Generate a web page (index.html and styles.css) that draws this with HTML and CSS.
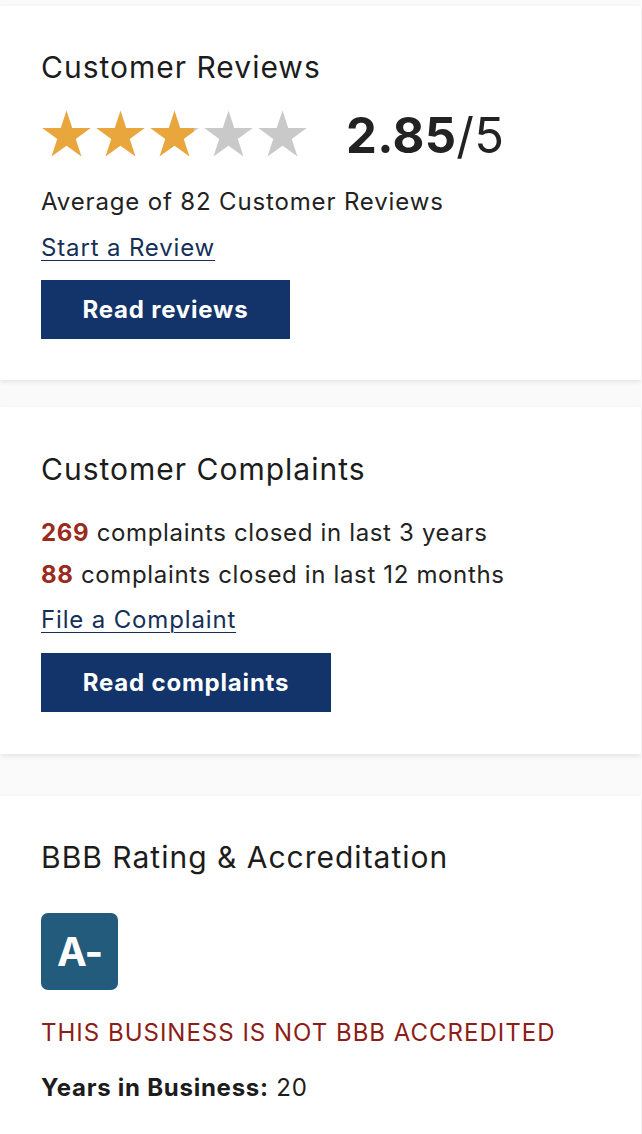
FILE: index.html
```html
<!DOCTYPE html>
<html lang="en">
<head>
<meta charset="utf-8">
<title>Business Profile</title>
<link rel="stylesheet" href="styles.css">
</head>
<body>
<div class="page">
  <section class="card card-reviews">
    <h2 class="card-title">Customer Reviews</h2>
    <div class="rating-row">
      <div class="stars">
        <svg class="star" viewBox="0 0 100 90.45"><polygon class="on" points="50,0 61.23,34.55 97.55,34.55 68.16,55.9 79.39,90.45 50,69.1 20.61,90.45 31.84,55.9 2.45,34.55 38.77,34.55"/></svg>
        <svg class="star" viewBox="0 0 100 90.45"><polygon class="on" points="50,0 61.23,34.55 97.55,34.55 68.16,55.9 79.39,90.45 50,69.1 20.61,90.45 31.84,55.9 2.45,34.55 38.77,34.55"/></svg>
        <svg class="star" viewBox="0 0 100 90.45"><defs><linearGradient id="part" x1="0" x2="1" y1="0" y2="0"><stop offset="0.9" stop-color="#e9a63d"/><stop offset="0.9" stop-color="#c9c9c9"/></linearGradient></defs><polygon fill="url(#part)" points="50,0 61.23,34.55 97.55,34.55 68.16,55.9 79.39,90.45 50,69.1 20.61,90.45 31.84,55.9 2.45,34.55 38.77,34.55"/></svg>
        <svg class="star" viewBox="0 0 100 90.45"><polygon class="off" points="50,0 61.23,34.55 97.55,34.55 68.16,55.9 79.39,90.45 50,69.1 20.61,90.45 31.84,55.9 2.45,34.55 38.77,34.55"/></svg>
        <svg class="star" viewBox="0 0 100 90.45"><polygon class="off" points="50,0 61.23,34.55 97.55,34.55 68.16,55.9 79.39,90.45 50,69.1 20.61,90.45 31.84,55.9 2.45,34.55 38.77,34.55"/></svg>
      </div>
      <div class="score"><strong>2.85</strong>/5</div>
    </div>
    <p class="line">Average of 82 Customer Reviews</p>
    <p class="line"><a class="link" href="#">Start a Review</a></p>
    <a class="btn btn-reviews" href="#">Read reviews</a>
  </section>

  <section class="card card-complaints">
    <h2 class="card-title">Customer Complaints</h2>
    <p class="stat"><strong class="num">269</strong> complaints closed in last 3 years</p>
    <p class="stat"><strong class="num">88</strong> complaints closed in last 12 months</p>
    <p class="line link-line"><a class="link" href="#">File a Complaint</a></p>
    <a class="btn btn-complaints" href="#">Read complaints</a>
  </section>

  <section class="card card-rating">
    <h2 class="card-title">BBB Rating &amp; Accreditation</h2>
    <div class="badge">A-</div>
    <p class="not-accredited">THIS BUSINESS IS NOT BBB ACCREDITED</p>
    <p class="years"><strong>Years in Business:</strong> 20</p>
  </section>
</div>
</body>
</html>
```

FILE: styles.css
```css
* { box-sizing: border-box; }
html, body {
  margin: 0;
  padding: 0;
  background: #fafafa;
}
body {
  font-family: "Inter", "Noto Sans", sans-serif;
  color: #222;
}
.page {
  padding-top: 6px;
  display: flex;
  flex-direction: column;
}
.card {
  background: #fff;
  padding-left: 41px;
  padding-right: 20px;
  margin-right: 1px;
  box-shadow: 0 2px 5px rgba(0, 0, 0, 0.09);
  display: flex;
  flex-direction: column;
  align-items: flex-start;
}
.card-reviews { padding-top: 43px; padding-bottom: 41px; }
.card-complaints { margin-top: 27px; padding-top: 44px; padding-bottom: 42px; }
.card-rating { margin-top: 42px; padding-top: 43px; min-height: 340px; }

.card-title {
  margin: 0;
  font-size: 30px;
  line-height: 36px;
  font-weight: 400;
  letter-spacing: 1px;
  color: #1c1c1c;
}
.rating-row {
  margin-top: 25px;
  display: flex;
  align-items: center;
  gap: 38px;
}
.stars {
  display: flex;
  gap: 3px;
}
.star {
  width: 51px;
  height: 47px;
  display: block;
}
.star .on { fill: #e9a63d; }
.star .off { fill: #c9c9c9; }
.score {
  padding-top: 5px;
  font-size: 49px;
  line-height: 42px;
  font-weight: 400;
  color: #222;
  letter-spacing: 0.3px;
}
.score strong { font-weight: 700; }
.line {
  margin: 0;
  font-size: 24px;
  line-height: 46px;
  letter-spacing: 0.85px;
}
.card-reviews .line:first-of-type { margin-top: 22px; }
.link { color: #152f58; text-decoration: underline; text-underline-offset: 4px; text-decoration-thickness: 1px; }
.btn {
  display: flex;
  align-items: center;
  justify-content: center;
  height: 59px;
  margin-top: 9px;
  background: #12346a;
  color: #fff;
  font-size: 24px;
  font-weight: 700;
  letter-spacing: 0.8px;
  text-decoration: none;
}
.btn-reviews { width: 249px; }
.btn-complaints { width: 290px; }
.stat {
  margin: 0;
  font-size: 24px;
  line-height: 42px;
  letter-spacing: 0.65px;
}
.card-complaints .stat:first-of-type { margin-top: 25px; }
.num { color: #9a2a1e; font-weight: 700; }
.link-line { line-height: 48px; }
.badge {
  margin-top: 38px;
  width: 77px;
  height: 77px;
  border-radius: 7px;
  background: #225b7b;
  color: #fff;
  font-size: 40px;
  font-weight: 700;
  letter-spacing: -1px;
  display: flex;
  align-items: center;
  justify-content: center;
}
.not-accredited {
  margin: 27px 0 0;
  font-size: 24px;
  line-height: 32px;
  letter-spacing: 1px;
  color: #8c1d17;
}
.years {
  margin: 23px 0 0;
  font-size: 24px;
  line-height: 32px;
  letter-spacing: 0.75px;
  color: #1c1c1c;
}
.years strong { font-weight: 700; }
```
